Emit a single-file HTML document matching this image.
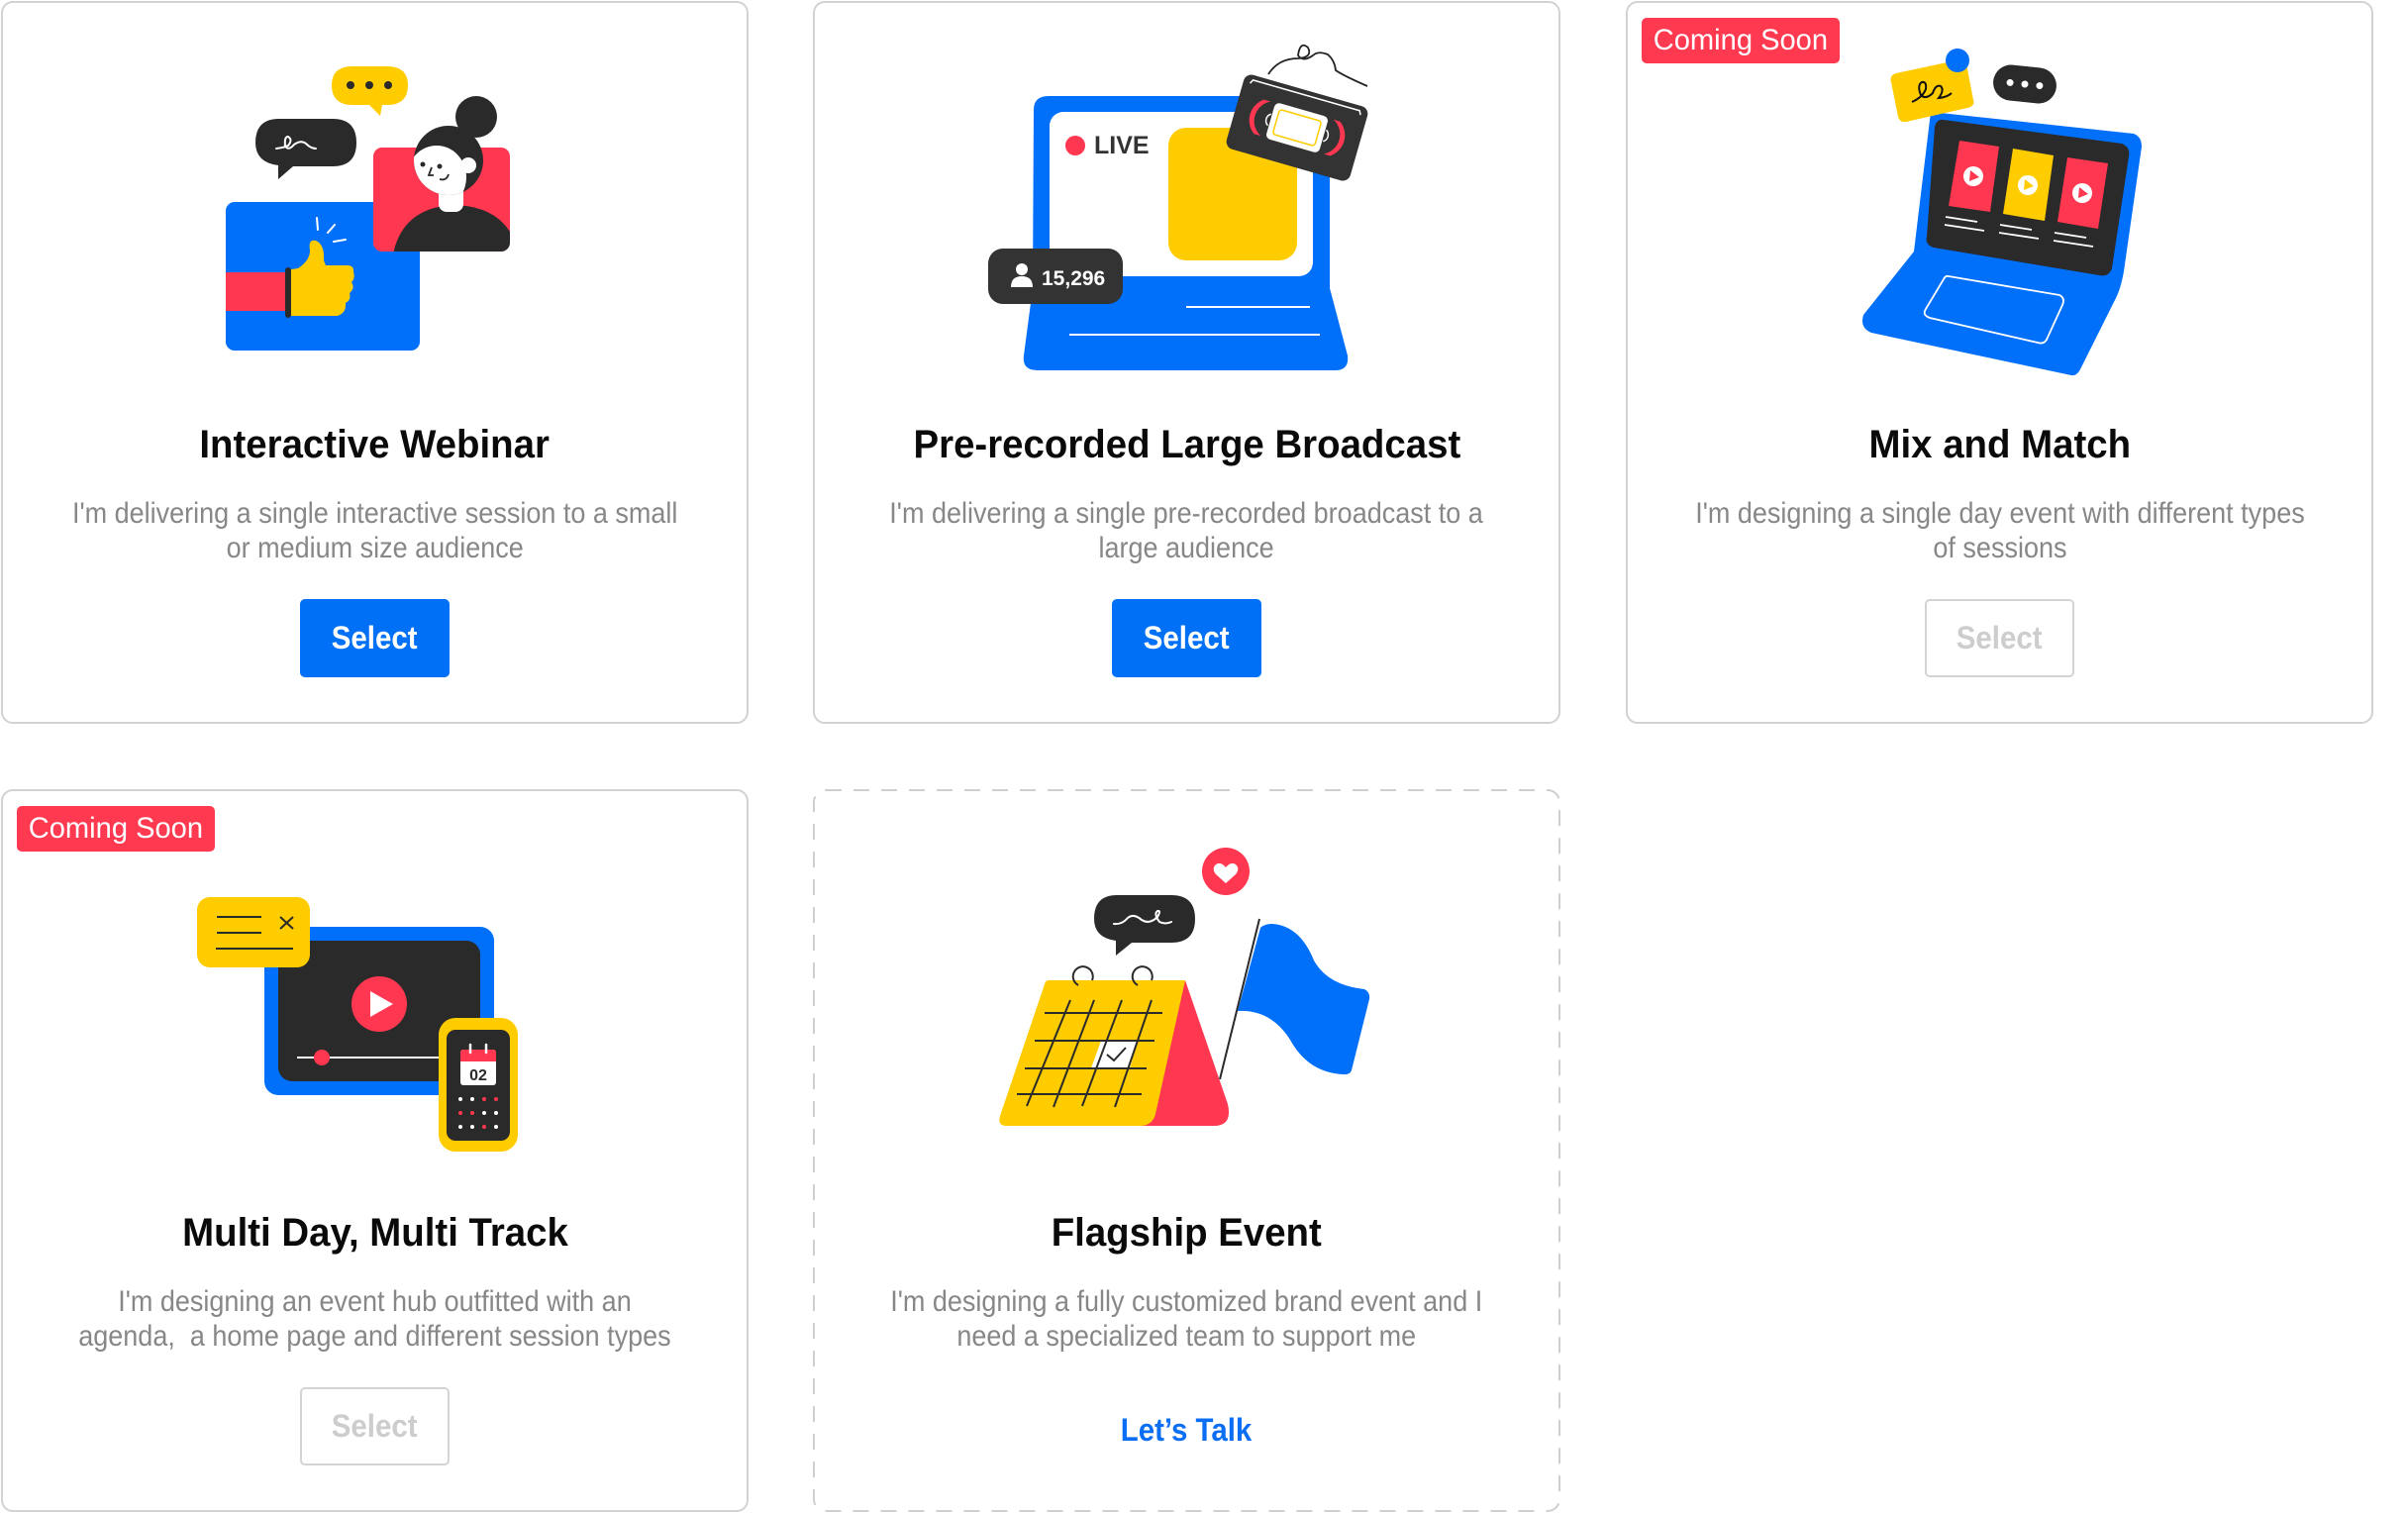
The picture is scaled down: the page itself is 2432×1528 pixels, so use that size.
<!DOCTYPE html>
<html><head><meta charset="utf-8">
<style>
html,body{margin:0;padding:0;background:#fff;}
body{width:2432px;height:1528px;position:relative;overflow:hidden;font-family:"Liberation Sans",sans-serif;}
.card{position:absolute;width:755px;height:730px;box-sizing:border-box;border:2px solid #d2d2d2;border-radius:12px;background:#fff;}
.card.dash{border:2px solid transparent;}
.card svg{position:absolute;left:-2px;top:-2px;}
.t{position:absolute;left:-2px;width:755px;top:421px;text-align:center;font-weight:bold;font-size:40px;line-height:50px;color:#0a0a0a;white-space:nowrap;}
.t span,.d span,.b span,.badge span,.lt span{display:inline-block;}
.t span{transform:scaleX(.96);}
.d{position:absolute;left:-2px;width:755px;top:498px;text-align:center;font-size:30px;line-height:35px;color:#878787;white-space:pre;}
.d span{transform:scaleX(.9);}
.b{position:absolute;left:300px;top:602px;width:151px;height:79px;box-sizing:border-box;border-radius:5px;background:#0070f6;color:#fff;font-size:32px;font-weight:bold;display:flex;align-items:center;justify-content:center;}
.b span{transform:scaleX(.92);}
.b.off{background:#fff;border:2px solid #d4d4d4;color:#cdcdcd;}
.badge{position:absolute;left:14px;top:15px;width:200px;height:46px;background:#ff3a50;border-radius:5px;color:#fff;font-size:30px;display:flex;align-items:center;justify-content:center;}
.badge span{transform:scaleX(.97);}
.lt{position:absolute;left:-2px;width:755px;top:625px;text-align:center;font-size:32px;font-weight:bold;color:#0a6ef5;line-height:40px;}
.lt span{transform:scaleX(.92);}
</style></head><body>

<!-- Card 1 -->
<div class="card" style="left:1px;top:1px;">
<svg width="755" height="730" viewBox="0 0 755 730">
  <rect x="227" y="203" width="196" height="150" rx="9" fill="#006ffa"/>
  <rect x="227" y="274" width="63" height="39" fill="#ff3750"/>
  <path d="M293,271 L300,270 Q312,262 312,252 Q310,240 318,242 Q327,246 326,262 L328,267 L351,267 Q357,268 356,274 Q358,280 354,284 Q358,290 352,295 Q354,302 348,305 Q349,315 340,318 L293,318 Z" fill="#ffcc00"/>
  <line x1="290" y1="272" x2="290" y2="317" stroke="#2a2a2a" stroke-width="6" stroke-linecap="round"/>
  <g stroke="#fff" stroke-width="2" stroke-linecap="round">
    <line x1="319" y1="219" x2="320" y2="231"/><line x1="337" y1="226" x2="330" y2="234"/><line x1="348" y1="241" x2="336" y2="243"/>
  </g>
  <defs><clipPath id="pk"><rect x="376" y="148" width="138" height="105" rx="9"/></clipPath><clipPath id="hd"><circle cx="452" cy="161" r="35"/></clipPath></defs>
  <rect x="376" y="148" width="138" height="105" rx="9" fill="#ff3750"/>
  <g clip-path="url(#pk)">
    <path d="M396,256 Q405,210 455,206 Q505,206 520,245 L520,256 Z" fill="#2a2a2a"/>
  </g>
  <rect x="442" y="185" width="25" height="28" rx="8" fill="#fff"/>
  <circle cx="480" cy="117" r="21" fill="#2a2a2a"/>
  <circle cx="452" cy="161" r="35" fill="#2a2a2a"/>
  <g clip-path="url(#hd)"><ellipse cx="440" cy="178" rx="30" ry="32" fill="#fff"/></g>
  <circle cx="472" cy="166" r="8" fill="#fff"/>
  <circle cx="426" cy="165" r="2.5" fill="#2a2a2a"/><circle cx="443" cy="167" r="2.5" fill="#2a2a2a"/>
  <path d="M435,168 L432,176 L437,176" fill="none" stroke="#2a2a2a" stroke-width="1.8"/>
  <path d="M443,180 Q450,182 452,175" fill="none" stroke="#2a2a2a" stroke-width="1.8"/>
  <path d="M355,66 L390,66 Q411,66 411,85 Q411,105 390,105 L385,105 L383,116 L372,105 L355,105 Q334,105 334,85 Q334,66 355,66 Z" fill="#ffcc00"/>
  <circle cx="353" cy="85" r="4" fill="#2a2a2a"/><circle cx="372" cy="85" r="4" fill="#2a2a2a"/><circle cx="391" cy="85" r="4" fill="#2a2a2a"/>
  <path d="M281,119 L335,119 Q359,119 359,143 Q359,167 335,167 L295,167 L280,180 L280,166 Q257,163 257,143 Q257,119 281,119 Z" fill="#2a2a2a"/>
  <path d="M278,149 Q286,148 290,146 Q295,140 290,137 Q286,137 287,146 Q290,152 296,145 Q303,140 308,144 Q313,149 318,149" fill="none" stroke="#fff" stroke-width="2" stroke-linecap="round"/>
</svg>
<div class="t"><span>Interactive Webinar</span></div>
<div class="d"><span>I'm delivering a single interactive session to a small
or medium size audience</span></div>
<div class="b"><span>Select</span></div>
</div>

<!-- Card 2 -->
<div class="card" style="left:821px;top:1px;">
<svg width="755" height="730" viewBox="0 0 755 730">
  <path d="M238,96 L508,96 Q522,96 522,110 L522,290 L540,358 Q542,373 527,373 L227,373 Q211,373 213,358 L222,290 L223,110 Q223,96 238,96 Z" fill="#006ffa"/>
  <rect x="239" y="112" width="266" height="166" rx="14" fill="#fff"/>
  <rect x="359" y="128" width="130" height="134" rx="18" fill="#ffcc00"/>
  <line x1="377" y1="309" x2="502" y2="309" stroke="#fff" stroke-width="2"/>
  <line x1="259" y1="337" x2="512" y2="337" stroke="#fff" stroke-width="2"/>
  <circle cx="265" cy="146" r="10" fill="#ff3750"/>
  <text x="284" y="154" font-family="Liberation Sans" font-weight="bold" font-size="25" fill="#333">LIVE</text>
  <rect x="177" y="250" width="136" height="56" rx="15" fill="#333"/>
  <circle cx="211" cy="271" r="6" fill="#fff"/>
  <path d="M200,289 Q200,278 211,278 Q222,278 222,289 Z" fill="#fff"/>
  <text x="231" y="287" font-family="Liberation Sans" font-weight="bold" font-size="21" fill="#fff">15,296</text>
  <g transform="translate(489,128) rotate(16)">
    <rect x="-65" y="-39" width="130" height="78" rx="8" fill="#333"/>
    <path d="M-58,-30 L-56,-34 L56,-34 L58,-30" fill="none" stroke="#fff" stroke-width="1.5"/>
    <path d="M-40,-18 A22,22 0 0 0 -40,18 L-33,18 A20,20 0 0 1 -33,-18 Z" fill="#ff3750"/>
    <path d="M40,-18 A22,22 0 0 1 40,18 L33,18 A20,20 0 0 0 33,-18 Z" fill="#ff3750"/>
    <path d="M-29,-6 A7,7 0 0 0 -29,6" fill="none" stroke="#fff" stroke-width="1.5"/>
    <path d="M29,-6 A7,7 0 0 1 29,6" fill="none" stroke="#fff" stroke-width="1.5"/>
    <rect x="-28" y="-19" width="56" height="38" rx="5" fill="#fff"/>
    <rect x="-22" y="-13" width="44" height="26" rx="3" fill="none" stroke="#ffcc00" stroke-width="1.5"/>
  </g>
  <path d="M460,74 Q470,58 490,58 Q505,57 500,47 Q492,40 490,55 Q495,62 505,55 Q510,50 520,54 Q527,60 528,70 Q535,75 560,86" fill="none" stroke="#222" stroke-width="1.8"/>
</svg>
<div class="t"><span>Pre-recorded Large Broadcast</span></div>
<div class="d"><span>I'm delivering a single pre-recorded broadcast to a
large audience</span></div>
<div class="b"><span>Select</span></div>
</div>

<!-- Card 3 -->
<div class="card" style="left:1642px;top:1px;">
<svg width="755" height="730" viewBox="0 0 755 730">
  <path d="M308,112 L513,134 Q521,137 521,147 L503,273 Q500,290 495,300 L460,370 Q456,379 450,378 L248,335 Q236,330 240,317 L291,253 Z" fill="#006ffa"/>
  <path d="M321,120 L501,144 Q510,148 508,157 L491,270 Q488,279 478,277 L311,249 Q302,246 304,238 L312,127 Q314,119 321,120 Z" fill="#2a2a2a"/>
  <path d="M337,141 L377,147 L368,213 L326,207 Z" fill="#ff3750"/>
  <path d="M391,149 L432,156 L423,222 L381,215 Z" fill="#ffcc00"/>
  <path d="M446,158 L487,164 L477,230 L436,223 Z" fill="#ff3750"/>
  <circle cx="351" cy="177" r="10" fill="#fff"/><path d="M348,171 L357,178 L347,182 Z" fill="#ff3750"/>
  <circle cx="406" cy="186" r="10" fill="#fff"/><path d="M403,180 L412,187 L402,191 Z" fill="#ffcc00"/>
  <circle cx="461" cy="194" r="10" fill="#fff"/><path d="M458,188 L467,195 L457,199 Z" fill="#ff3750"/>
  <g stroke="#fff" stroke-width="1.8">
    <line x1="323" y1="218" x2="355" y2="223"/><line x1="322" y1="226" x2="362" y2="232"/>
    <line x1="378" y1="226" x2="410" y2="231"/><line x1="377" y1="234" x2="417" y2="240"/>
    <line x1="433" y1="234" x2="465" y2="239"/><line x1="432" y1="242" x2="472" y2="248"/>
  </g>
  <path d="M326,278 L438,297 Q444,300 441,307 L425,342 Q422,347 416,345 L307,320 Q299,317 303,311 L321,281 Q323,277 326,278 Z" fill="none" stroke="#fff" stroke-width="1.8"/>
  <path d="M273,73 L343,58 L351,100 Q353,106 345,108 L283,122 Q277,123 275,117 L268,82 Q266,75 273,73 Z" fill="#ffcc00"/>
  <circle cx="335" cy="60" r="12" fill="#006ffa"/>
  <path d="M289,102 Q300,97 303,89 Q304,81 299,82 Q294,85 298,95 Q303,100 310,93 Q313,84 318,86 Q322,90 316,98 Q325,97 329,93" fill="none" stroke="#111" stroke-width="2"/>
  <g transform="translate(403,84) rotate(6)"><rect x="-32" y="-18" width="64" height="36" rx="18" fill="#2a2a2a"/>
  <circle cx="-15" cy="0" r="3.5" fill="#fff"/><circle cx="0" cy="0" r="3.5" fill="#fff"/><circle cx="15" cy="0" r="3.5" fill="#fff"/></g>
</svg>
<div class="badge"><span>Coming Soon</span></div>
<div class="t"><span>Mix and Match</span></div>
<div class="d"><span>I'm designing a single day event with different types
of sessions</span></div>
<div class="b off"><span>Select</span></div>
</div>

<!-- Card 4 -->
<div class="card" style="left:1px;top:797px;">
<svg width="755" height="730" viewBox="0 0 755 730">
  <rect x="266" y="139" width="232" height="170" rx="14" fill="#006ffa"/>
  <rect x="280" y="153" width="204" height="142" rx="14" fill="#2a2a2a"/>
  <circle cx="382" cy="217" r="28" fill="#ff3750"/>
  <path d="M373,204 L396,217 L373,230 Z" fill="#fff"/>
  <line x1="299" y1="271" x2="442" y2="271" stroke="#fff" stroke-width="2"/>
  <circle cx="324" cy="271" r="8" fill="#ff3750"/>
  <rect x="198" y="109" width="114" height="71" rx="13" fill="#ffcc00"/>
  <g stroke="#2a2a2a" stroke-width="2">
    <line x1="218" y1="129" x2="263" y2="129"/><line x1="218" y1="145" x2="263" y2="145"/><line x1="217" y1="161" x2="295" y2="161"/>
    <line x1="282" y1="129" x2="295" y2="141"/><line x1="295" y1="129" x2="282" y2="141"/>
  </g>
  <rect x="442" y="231" width="80" height="135" rx="17" fill="#ffcc00"/>
  <rect x="450" y="243" width="64" height="112" rx="9" fill="#2a2a2a"/>
  <rect x="464" y="263" width="36" height="36" rx="3" fill="#fff"/>
  <path d="M464,275 L464,266 Q464,263 467,263 L497,263 Q500,263 500,266 L500,275 Z" fill="#ff3750"/>
  <g stroke="#fff" stroke-width="2.5" stroke-linecap="round"><line x1="474" y1="258" x2="474" y2="266"/><line x1="490" y1="258" x2="490" y2="266"/></g>
  <text x="482" y="294" text-anchor="middle" font-family="Liberation Sans" font-weight="bold" font-size="16" fill="#2a2a2a">02</text>
  <g>
    <circle cx="464" cy="313" r="2" fill="#fff"/><circle cx="476" cy="313" r="2" fill="#fff"/><circle cx="488" cy="313" r="2" fill="#ff3750"/><circle cx="500" cy="313" r="2" fill="#ff3750"/>
    <circle cx="464" cy="327" r="2" fill="#ff3750"/><circle cx="476" cy="327" r="2" fill="#ff3750"/><circle cx="488" cy="327" r="2" fill="#fff"/><circle cx="500" cy="327" r="2" fill="#fff"/>
    <circle cx="464" cy="341" r="2" fill="#fff"/><circle cx="476" cy="341" r="2" fill="#fff"/><circle cx="488" cy="341" r="2" fill="#ff3750"/><circle cx="500" cy="341" r="2" fill="#fff"/>
  </g>
</svg>
<div class="badge"><span>Coming Soon</span></div>
<div class="t"><span>Multi Day, Multi Track</span></div>
<div class="d"><span>I'm designing an event hub outfitted with an
agenda,  a home page and different session types</span></div>
<div class="b off"><span>Select</span></div>
</div>

<!-- Card 5 -->
<div class="card dash" style="left:821px;top:797px;">
<svg width="755" height="730" viewBox="0 0 755 730">
  <rect x="1" y="1" width="753" height="728" rx="12" fill="none" stroke="#cfcfcf" stroke-width="2" stroke-dasharray="16 12"/>
  <circle cx="417" cy="83" r="24" fill="#ff3750"/>
  <path d="M417,95 L407,86 Q403,81 406,77 Q411,72 417,79 Q423,72 428,77 Q431,81 427,86 Z" fill="#fff"/>
  <path d="M307,107 L362,107 Q386,107 386,131 Q386,155 362,155 L322,155 L306,168 L306,153 Q284,150 284,131 Q284,107 307,107 Z" fill="#2a2a2a"/>
  <path d="M304,136 Q312,137 318,130 Q324,125 332,132 Q340,137 348,129 Q352,122 348,123 Q344,126 350,134 Q356,137 362,134" fill="none" stroke="#fff" stroke-width="2" stroke-linecap="round"/>
  <path d="M376,193 L419,318 Q424,340 405,340 L330,340 Z" fill="#ff3750"/>
  <path d="M238,193 L376,193 L346,328 Q343,340 330,340 L196,340 Q186,340 189,330 L234,197 Q235,193 238,193 Z" fill="#ffcc00"/>
  <path d="M291,254 L328,254 L320,282 L281,282 Z" fill="#fff"/>
  <path d="M297,268 L304,274 L316,261" fill="none" stroke="#2a2a2a" stroke-width="2"/>
  <g stroke="#2a2a2a" stroke-width="2">
    <line x1="234" y1="226" x2="353" y2="226"/><line x1="224" y1="254" x2="345" y2="254"/>
    <line x1="214" y1="282" x2="337" y2="282"/><line x1="206" y1="308" x2="332" y2="308"/>
    <line x1="260" y1="213" x2="216" y2="320"/><line x1="284" y1="213" x2="243" y2="321"/>
    <line x1="312" y1="213" x2="272" y2="320"/><line x1="342" y1="213" x2="305" y2="321"/>
  </g>
  <g fill="none" stroke="#2a2a2a" stroke-width="2">
    <path d="M268,198 A10,10 0 1 1 282,193"/><path d="M328,198 A10,10 0 1 1 342,193"/>
  </g>
  <line x1="451" y1="131" x2="411" y2="293" stroke="#2a2a2a" stroke-width="2"/>
  <path d="M452,140 Q456,136 464,136 Q492,138 506,173 Q520,198 557,202 Q563,205 562,212 L544,284 Q542,289 535,288 Q500,286 482,253 Q462,222 429,224 Z" fill="#006ffa"/>
</svg>
<div class="t"><span>Flagship Event</span></div>
<div class="d"><span>I'm designing a fully customized brand event and I
need a specialized team to support me</span></div>
<div class="lt"><span>Let’s Talk</span></div>
</div>

</body></html>
